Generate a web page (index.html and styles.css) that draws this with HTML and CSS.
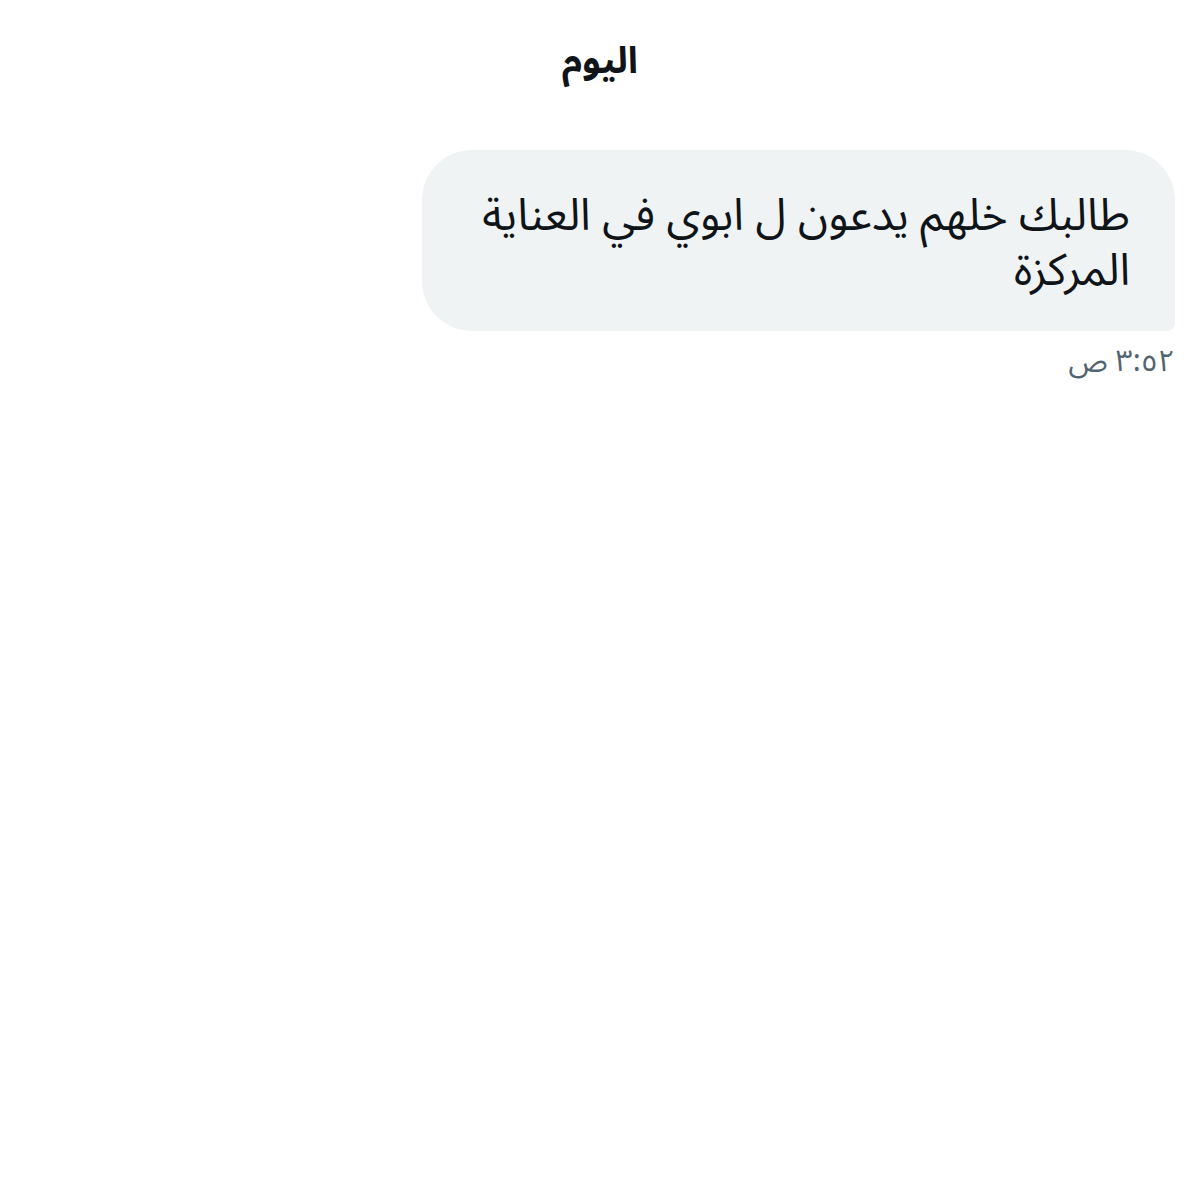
FILE: index.html
```html
<!DOCTYPE html>
<html lang="ar" dir="rtl">
<head>
<meta charset="utf-8">
<link rel="stylesheet" href="styles.css">
</head>
<body>
<div class="page">
  <div class="day">اليوم</div>
  <div class="msg">
    <div class="bubble">طالبك خلهم يدعون ل ابوي في العناية المركزة</div>
    <div class="time">٣:٥٢ ص</div>
  </div>
</div>
</body>
</html>
```
FILE: styles.css
```css
html, body {
  margin: 0;
  padding: 0;
  background: #ffffff;
}
body {
  font-family: "Noto Sans Arabic", "DejaVu Sans", "Noto Sans", sans-serif;
  color: #0f1419;
}
.page {
  width: 1200px;
  height: 1200px;
  box-sizing: border-box;
  padding-right: 25px;
  display: flex;
  flex-direction: column;
}
.day {
  width: 1200px;
  margin-right: -25px;
  text-align: center;
  font-weight: bold;
  font-size: 37px;
  line-height: 50px;
  padding-top: 36px;
  box-sizing: border-box;
}
.msg {
  margin-top: 64px;
  display: flex;
  flex-direction: column;
  align-items: flex-start;
}
.bubble {
  width: 753px;
  box-sizing: border-box;
  background: #eff3f4;
  border-radius: 50px 50px 8px 50px;
  padding: 39px 45px 32px 36px;
  font-size: 44.5px;
  line-height: 55px;
}
.time {
  margin-top: 12px;
  color: #536471;
  font-size: 30px;
  line-height: 38px;
}
```
